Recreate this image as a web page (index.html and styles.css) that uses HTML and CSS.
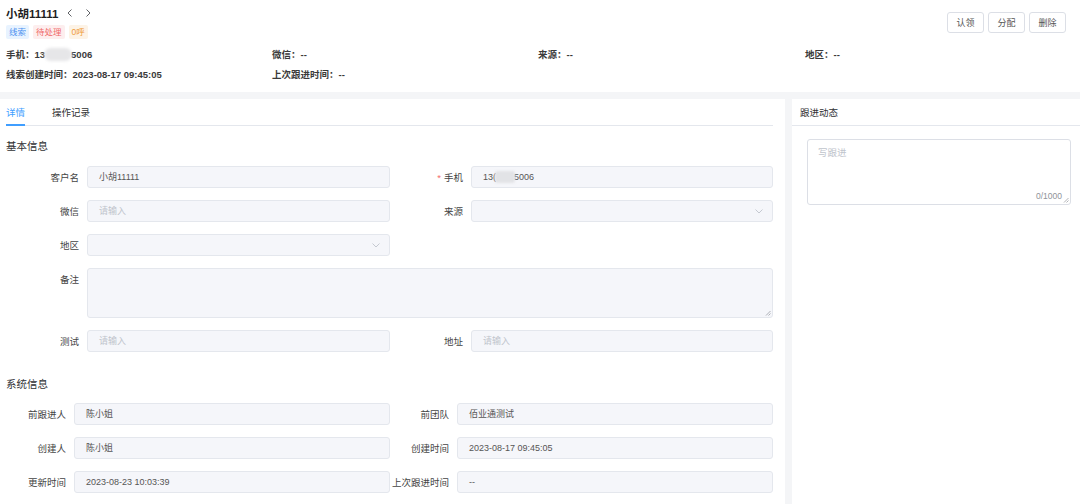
FILE: index.html
```html
<!DOCTYPE html>
<html lang="zh-CN">
<head>
<meta charset="utf-8">
<title>线索详情</title>
<link rel="stylesheet" href="styles.css">
</head>
<body>
<header class="header">
  <div class="head-main">
    <div class="title-row">
      <span class="title">小胡11111</span>
      <span class="nav">
        <svg viewBox="0 0 10 10" width="10" height="10"><path d="M6.5 1.5 L3 5 L6.5 8.5" fill="none" stroke="#606266" stroke-width="1"/></svg>
        <svg viewBox="0 0 10 10" width="10" height="10"><path d="M3.5 1.5 L7 5 L3.5 8.5" fill="none" stroke="#606266" stroke-width="1"/></svg>
      </span>
    </div>
    <div class="tags">
      <span class="tag tag-blue">线索</span>
      <span class="tag tag-red">待处理</span>
      <span class="tag tag-orange">0呼</span>
    </div>
    <div class="info-grid">
      <div class="info">手机：13<span class="blur"></span>5006</div>
      <div class="info">微信：--</div>
      <div class="info">来源：--</div>
      <div class="info">地区：--</div>
      <div class="info">线索创建时间：2023-08-17 09:45:05</div>
      <div class="info">上次跟进时间：--</div>
    </div>
  </div>
  <div class="actions">
    <button class="btn">认领</button>
    <button class="btn">分配</button>
    <button class="btn">删除</button>
  </div>
</header>

<main class="main">
  <section class="left">
    <nav class="tabs">
      <span class="tab active">详情</span>
      <span class="tab">操作记录</span>
    </nav>

    <h3 class="section-title">基本信息</h3>
    <div class="form">
      <div class="field">
        <label class="label">客户名</label>
        <div class="input">小胡11111</div>
      </div>
      <div class="field">
        <label class="label"><span class="req">*</span>手机</label>
        <div class="input">13(<span class="blur blur-sm"></span>5006</div>
      </div>
      <div class="field">
        <label class="label">微信</label>
        <div class="input placeholder">请输入</div>
      </div>
      <div class="field">
        <label class="label">来源</label>
        <div class="input select"><svg class="chev" viewBox="0 0 10 10" width="10" height="10"><path d="M1.5 3.5 L5 7 L8.5 3.5" fill="none" stroke="#c0c4cc" stroke-width="0.9"/></svg></div>
      </div>
      <div class="field">
        <label class="label">地区</label>
        <div class="input select"><svg class="chev" viewBox="0 0 10 10" width="10" height="10"><path d="M1.5 3.5 L5 7 L8.5 3.5" fill="none" stroke="#c0c4cc" stroke-width="0.9"/></svg></div>
      </div>
      <div class="field"></div>
      <div class="field wide">
        <label class="label top">备注</label>
        <div class="input textarea"><svg class="grip" viewBox="0 0 6 6" width="6" height="6"><path d="M5.5 1 L1 5.5 M5.5 3.5 L3.5 5.5" stroke="#909399" stroke-width="0.7"/></svg></div>
      </div>
      <div class="field">
        <label class="label">测试</label>
        <div class="input placeholder">请输入</div>
      </div>
      <div class="field">
        <label class="label">地址</label>
        <div class="input placeholder">请输入</div>
      </div>
    </div>

    <h3 class="section-title sys-title">系统信息</h3>
    <div class="form sys">
      <div class="field">
        <label class="label">前跟进人</label>
        <div class="input">陈小姐</div>
      </div>
      <div class="field">
        <label class="label">前团队</label>
        <div class="input">佰业通测试</div>
      </div>
      <div class="field">
        <label class="label">创建人</label>
        <div class="input">陈小姐</div>
      </div>
      <div class="field">
        <label class="label">创建时间</label>
        <div class="input">2023-08-17 09:45:05</div>
      </div>
      <div class="field">
        <label class="label">更新时间</label>
        <div class="input">2023-08-23 10:03:39</div>
      </div>
      <div class="field">
        <label class="label">上次跟进时间</label>
        <div class="input">--</div>
      </div>
    </div>
  </section>

  <aside class="right">
    <div class="right-head">跟进动态</div>
    <div class="follow">
      <div class="follow-box">
        <span class="placeholder">写跟进</span>
        <span class="count">0/1000</span>
        <svg class="grip grip-r" viewBox="0 0 6 6" width="6" height="6"><path d="M5.5 1 L1 5.5 M5.5 3.5 L3.5 5.5" stroke="#909399" stroke-width="0.7"/></svg>
      </div>
    </div>
  </aside>
</main>
</body>
</html>
```

FILE: styles.css
```css
* { box-sizing: border-box; }

html, body {
  margin: 0;
  padding: 0;
}

body {
  width: 1080px;
  height: 504px;
  overflow: hidden;
  background: #f4f5f7;
  font-family: "Liberation Sans", "Noto Sans CJK SC", sans-serif;
  font-size: 10px;
  color: #303133;
}

.header {
  background: #fff;
  height: 92px;
  display: flex;
  justify-content: space-between;
  padding: 4px 14px 0 6px;
}

.head-main {
  flex: 1;
  min-width: 0;
}

.title-row {
  display: flex;
  align-items: center;
  height: 17px;
}

.title {
  font-size: 11.5px;
  font-weight: bold;
  color: #1f1f1f;
}

.nav {
  display: flex;
  gap: 8px;
  margin-left: 7px;
}

.nav svg { display: block; }

.tags {
  display: flex;
  gap: 4px;
  margin-top: 4px;
}

.tag {
  font-size: 8.5px;
  line-height: 14px;
  height: 14px;
  padding: 0 3px;
  border-radius: 2px;
}

.tag-blue { background: #e8f3ff; color: #4a90f0; }
.tag-red { background: #fdeeee; color: #f06a6a; }
.tag-orange { background: #fdf3e6; color: #ef9a3a; }

.info-grid {
  display: grid;
  grid-template-columns: 266px 266px 267px 200px;
  margin-top: 9px;
  row-gap: 6px;
}

.info {
  font-size: 9.5px;
  font-weight: bold;
  color: #3a3a3a;
  line-height: 14px;
  height: 14px;
  white-space: nowrap;
}

.blur {
  display: inline-block;
  width: 28px;
  height: 13px;
  margin: 0 -1px;
  vertical-align: -3px;
  background: #e6e6e8;
  border-radius: 7px;
  filter: blur(1.5px);
}

.blur-sm {
  width: 20px;
  height: 12px;
  border-radius: 3px;
  background: #e2e3e6;
  filter: blur(1px);
}

.actions {
  display: flex;
  flex: none;
  gap: 4px;
  padding-top: 8px;
  align-items: flex-start;
}

.btn {
  width: 37px;
  height: 21px;
  padding: 0;
  background: #fff;
  border: 1px solid #dcdfe6;
  border-radius: 3px;
  font-family: inherit;
  font-size: 9px;
  color: #555;
}

.main {
  display: flex;
  gap: 7px;
  margin-top: 7px;
  height: 405px;
}

.left {
  width: 785px;
  background: #fff;
  padding: 0 12px 0 6px;
}

.right {
  flex: 1;
  background: #fff;
}

.tabs {
  display: flex;
  gap: 27px;
  border-bottom: 1px solid #e4e7ed;
  height: 27px;
  align-items: flex-start;
}

.tab {
  font-size: 9.5px;
  color: #303133;
  padding-top: 7px;
  height: 27px;
  line-height: 13px;
}

.tab.active {
  color: #409eff;
  border-bottom: 2px solid #409eff;
  margin-bottom: -1px;
}

.section-title {
  margin: 0;
  font-size: 10.5px;
  font-weight: normal;
  color: #303133;
  height: 14px;
  line-height: 14px;
  margin-top: 13px;
}

.form {
  display: grid;
  grid-template-columns: 384px 383px;
  row-gap: 12px;
  margin-top: 13px;
}

.field {
  display: flex;
  align-items: center;
  min-height: 22px;
}

.field.wide {
  grid-column: 1 / 3;
  align-items: flex-start;
}

.label {
  width: 73px;
  flex: none;
  text-align: right;
  margin-right: 8px;
  font-size: 9.5px;
  color: #444;
  white-space: nowrap;
}

.label.top {
  padding-top: 4px;
}

.req {
  color: #f56c6c;
  margin-right: 3px;
}

.input {
  flex: 1;
  height: 22px;
  line-height: 20px;
  background: #f5f6fa;
  border: 1px solid #e4e7ed;
  border-radius: 3px;
  padding: 0 11px;
  font-size: 9px;
  color: #555;
  position: relative;
  white-space: nowrap;
}

.input.placeholder,
.placeholder {
  color: #c0c4cc;
}

.chev {
  position: absolute;
  right: 8px;
  top: 5px;
}

.textarea {
  height: 50px;
}

.grip {
  position: absolute;
  right: 1px;
  bottom: 1px;
}

.sys-title {
  margin-top: 25px;
}

.sys {
  margin-top: 12px;
}

.sys .label {
  width: 60px;
}

.sys .field:nth-child(2n) .label {
  width: 59px;
}

.right-head {
  height: 27px;
  line-height: 27px;
  padding-left: 8px;
  border-bottom: 1px solid #e4e7ed;
  font-size: 9.5px;
  color: #303133;
}

.follow {
  padding: 13px 9px 0 15px;
}

.follow-box {
  position: relative;
  height: 66px;
  border: 1px solid #dcdfe6;
  border-radius: 3px;
  padding: 5px 10px;
  font-size: 9.5px;
}

.count {
  position: absolute;
  right: 8px;
  bottom: 3px;
  font-size: 8.5px;
  color: #909399;
}

.grip-r {
  right: 1px;
  bottom: 1px;
}
```
